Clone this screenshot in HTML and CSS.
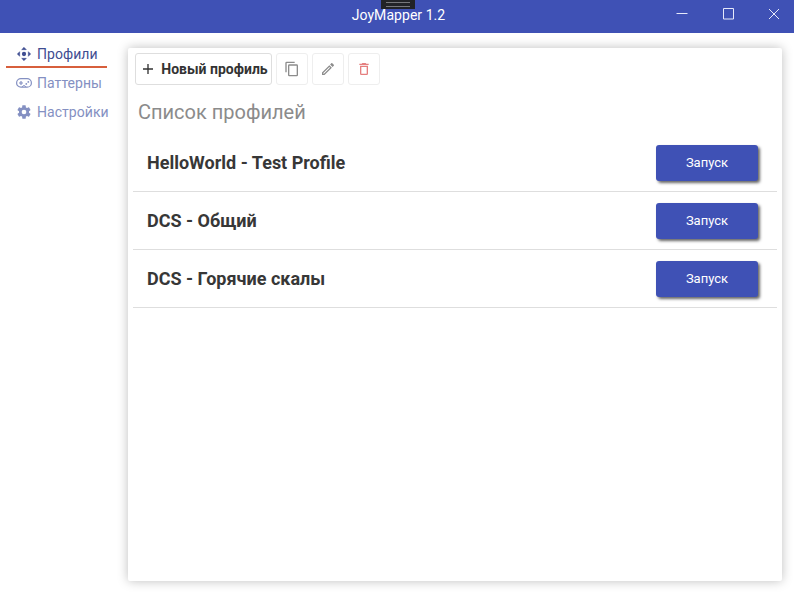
FILE: index.html
```html
<!DOCTYPE html>
<html lang="ru">
<head>
<meta charset="utf-8">
<title>JoyMapper 1.2</title>
<link rel="stylesheet" href="styles.css">
</head>
<body>
<header class="titlebar">
  <div class="debug-tab"></div>
  <h1 class="title">JoyMapper 1.2</h1>
  <div class="window-controls">
    <svg width="12" height="12" viewBox="0 0 12 12"><path d="M.5 5.500h11"/></svg>
    <svg width="12" height="12" viewBox="0 0 12 12"><path d="M1.500.5h10v10.500h-10z"/></svg>
    <svg width="12" height="12" viewBox="0 0 12 12"><path d="M1 1l10 10M11 1L1 11"/></svg>
  </div>
</header>
<div class="layout">
  <nav class="sidebar">
    <a class="nav-item active">
      <svg width="16" height="16" viewBox="0 0 24 24"><circle cx="12" cy="12" r="3.200"/><path d="M8.500 5.500L12 2l3.500 3.500zM8.500 18.500L12 22l3.500-3.500zM5.500 8.500L2 12l3.500 3.500zM18.500 8.500L22 12l-3.500 3.500z" stroke="currentColor" stroke-width=".8"/></svg>
      <span>Профили</span>
    </a>
    <a class="nav-item">
      <svg width="16" height="16" viewBox="0 0 16 16"><rect x=".6" y="3.600" width="14.800" height="8.600" rx="4.300" fill="none" stroke="currentColor" stroke-width="1.200"/><path d="M5 6v4M3 8h4" stroke="currentColor" stroke-width="1.200"/><path d="M6.200 11.900l1-1.200h1.600l1 1.200" fill="none" stroke="currentColor"/><circle cx="10.300" cy="8.900" r=".9"/><circle cx="12.300" cy="6.900" r=".9"/></svg>
      <span>Паттерны</span>
    </a>
    <a class="nav-item">
      <svg width="16" height="16" viewBox="0 0 24 24"><path d="M12 15.500A3.500 3.500 0 0 1 8.500 12 3.500 3.500 0 0 1 12 8.500a3.500 3.500 0 0 1 3.500 3.500 3.500 3.500 0 0 1-3.500 3.500m7.430-2.530c.04-.32.07-.64.07-.97s-.03-.66-.07-1l2.110-1.630c.19-.15.24-.42.12-.64l-2-3.460c-.12-.22-.39-.31-.61-.22l-2.490 1c-.52-.39-1.060-.73-1.690-.98l-.37-2.650A.506.506 0 0 0 14 2h-4c-.25 0-.46.18-.5.420l-.37 2.650c-.63.25-1.170.59-1.690.98l-2.490-1c-.22-.09-.49 0-.61.22l-2 3.460c-.13.22-.07.49.12.64L4.570 11c-.04.34-.07.67-.07 1s.03.65.07.97l-2.110 1.660c-.19.15-.25.42-.12.64l2 3.460c.12.22.39.3.61.22l2.490-1.010c.52.4 1.060.74 1.690.99l.37 2.650c.04.24.25.42.5.42h4c.25 0 .46-.18.5-.42l.37-2.650c.63-.26 1.170-.59 1.690-.99l2.490 1.010c.22.08.49 0 .61-.22l2-3.460c.12-.22.07-.49-.12-.64z"/></svg>
      <span>Настройки</span>
    </a>
  </nav>
  <main class="card">
    <div class="toolbar">
      <button class="tool new"><svg width="16" height="16" viewBox="0 0 24 24"><path d="M19.500 13H13v6.500h-2V13H4.500v-2H11V4.500h2V11h6.500z"/></svg><span>Новый профиль</span></button>
      <button class="tool icon"><svg width="16" height="16" viewBox="0 0 24 24"><path d="M19 21H8V7h11m0-2H8a2 2 0 0 0-2 2v14a2 2 0 0 0 2 2h11a2 2 0 0 0 2-2V7a2 2 0 0 0-2-2m-3-4H4a2 2 0 0 0-2 2v14h2V3h12z"/></svg></button>
      <button class="tool icon"><svg width="16" height="16" viewBox="0 0 24 24"><path d="M14.060 9l.94.940L5.920 19H5v-.92L14.060 9m3.600-6c-.25 0-.51.1-.7.290l-1.830 1.830 3.750 3.750 1.830-1.830c.39-.39.39-1.040 0-1.410l-2.340-2.340c-.2-.2-.45-.29-.71-.29m-3.600 3.190L3 17.250V21h3.750L17.810 9.940l-3.750-3.750z"/></svg></button>
      <button class="tool icon danger"><svg width="16" height="16" viewBox="0 0 24 24"><path d="M6 19a2 2 0 0 0 2 2h8a2 2 0 0 0 2-2V7H6v12M8 9h8v10H8V9m7.500-5l-1-1h-5l-1 1H5v2h14V4h-3.500z"/></svg></button>
    </div>
    <h2 class="heading">Список профилей</h2>
    <ul class="profiles">
      <li><span>HelloWorld - Test Profile</span><button class="run">Запуск</button></li>
      <li><span>DCS - Общий</span><button class="run">Запуск</button></li>
      <li><span>DCS - Горячие скалы</span><button class="run">Запуск</button></li>
    </ul>
  </main>
</div>
</body>
</html>
```
FILE: styles.css
```css
* { box-sizing: border-box; }
body {
  margin: 0;
  height: 592px;
  overflow: hidden;
  display: flex;
  flex-direction: column;
  background: #fff;
  font-family: Roboto, "Liberation Sans", sans-serif;
}
svg { display: block; flex: none; fill: currentColor; }
button { font-family: inherit; padding: 0; }

.titlebar {
  position: relative;
  flex: none;
  height: 33px;
  background: #3f51b5;
  color: #fff;
}
.title {
  margin: 0;
  padding: 7px 0 0 3px;
  text-align: center;
  font-size: 14px;
  line-height: 17px;
  font-weight: 400;
  letter-spacing: .05px;
}
.debug-tab {
  position: absolute;
  left: 381px;
  top: 0;
  width: 34px;
  height: 9px;
  padding: 2px 5px;
  background: #222326;
}
.debug-tab::before {
  content: "";
  display: block;
  height: 3px;
  border-top: 1px solid #77787b;
  border-bottom: 1px solid #77787b;
}
.window-controls {
  position: absolute;
  right: 14px;
  top: 8px;
  display: flex;
  gap: 34px;
}
.window-controls svg { fill: none; stroke: #e6e9fa; }

.layout { flex: 1; display: flex; min-height: 0; }
.sidebar { width: 128px; flex: none; padding: 8px 0 0 6px; }
.nav-item {
  width: 101px;
  height: 29px;
  padding: 0 0 0 10px;
  display: flex;
  align-items: center;
  gap: 5px;
  color: #8490c2;
  font-size: 14px;
  letter-spacing: .05px;
  white-space: nowrap;
}
.nav-item.active {
  height: 27px;
  color: #3f4d91;
  border-bottom: 2px solid #d75f3c;
}

.card {
  width: 654px;
  height: 533px;
  margin-top: 15px;
  padding: 5px 5px 0;
  background: #fff;
  border-radius: 2px;
  box-shadow: 0 0 11px rgba(0, 0, 0, .26);
}
.toolbar { display: flex; gap: 4px; padding-left: 2px; }
.tool {
  height: 32px;
  display: flex;
  align-items: center;
  justify-content: center;
  background: #fff;
  border: 1px solid #dedede;
  border-radius: 3px;
  color: #333;
}
.tool.new {
  width: 137px;
  padding-left: 1px;
  gap: 5px;
  font-size: 14px;
  font-weight: 700;
  white-space: nowrap;
}
.tool.icon { width: 32px; color: #8c8c8c; border-color: #eee; }
.tool.danger { color: #e57f7f; }
.heading {
  margin: 13px 0 0 5px;
  font-size: 20px;
  line-height: 28px;
  font-weight: 400;
  color: #8b8b8b;
}
.profiles { list-style: none; margin: 8px 0 0; padding: 0; }
.profiles li {
  height: 58px;
  padding: 0 19px 0 14px;
  display: flex;
  align-items: center;
  justify-content: space-between;
  border-bottom: 1px solid #dedede;
  font-size: 18px;
  font-weight: 700;
  color: #373737;
}
.run {
  width: 102px;
  height: 36px;
  border: 0;
  border-radius: 3px;
  background: #3f51b5;
  color: #fff;
  font-size: 13px;
  box-shadow: 2px 2px 3px rgba(0, 0, 0, .6);
}
```
